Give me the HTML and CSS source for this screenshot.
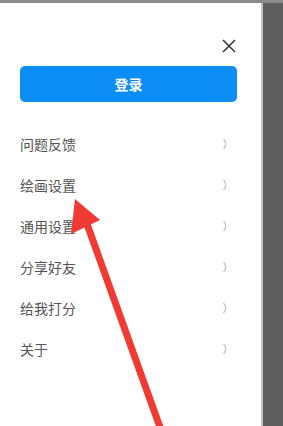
FILE: index.html
```html
<!DOCTYPE html>
<html lang="zh-CN">
<head>
    <meta charset="UTF-8">
    <meta name="viewport" content="width=device-width, initial-scale=1.0">
    <title>设置</title>
    <link rel="stylesheet" href="styles.css">
</head>
<body>
    <div class="topbar"></div>
    <div class="screen">
        <div class="drawer">
            <div class="close-row">
                <svg class="close" width="16" height="16" viewBox="0 0 16 16">
                    <path d="M2 2 L14 14 M14 2 L2 14" stroke="#333" stroke-width="1.5" fill="none"/>
                </svg>
            </div>

            <button class="login">登录</button>

            <ul class="menu">
                <li>问题反馈<svg class="chev" width="7" height="12" viewBox="0 0 7 12"><path d="M1.5 1 Q6 6 1.5 11" stroke="#c2c2c2" stroke-width="1.3" fill="none"/></svg></li>
                <li>绘画设置<svg class="chev" width="7" height="12" viewBox="0 0 7 12"><path d="M1.5 1 Q6 6 1.5 11" stroke="#c2c2c2" stroke-width="1.3" fill="none"/></svg></li>
                <li>通用设置<svg class="chev" width="7" height="12" viewBox="0 0 7 12"><path d="M1.5 1 Q6 6 1.5 11" stroke="#c2c2c2" stroke-width="1.3" fill="none"/></svg></li>
                <li>分享好友<svg class="chev" width="7" height="12" viewBox="0 0 7 12"><path d="M1.5 1 Q6 6 1.5 11" stroke="#c2c2c2" stroke-width="1.3" fill="none"/></svg></li>
                <li>给我打分<svg class="chev" width="7" height="12" viewBox="0 0 7 12"><path d="M1.5 1 Q6 6 1.5 11" stroke="#c2c2c2" stroke-width="1.3" fill="none"/></svg></li>
                <li>关于<svg class="chev" width="7" height="12" viewBox="0 0 7 12"><path d="M1.5 1 Q6 6 1.5 11" stroke="#c2c2c2" stroke-width="1.3" fill="none"/></svg></li>
            </ul>
        </div>
        <div class="shade"></div>
    </div>

    <!-- annotation arrow drawn over the screenshot -->
    <svg class="arrow" width="283" height="426" viewBox="0 0 283 426">
        <line x1="87" y1="224" x2="161" y2="430" stroke="#ef3b33" stroke-width="7"/>
        <polygon points="75,199 71,234 100,220" fill="#ef3b33"/>
    </svg>
</body>
</html>
```

FILE: styles.css
```css
body {
    margin: 0;
    height: 426px;
    overflow: hidden;
    font-family: "Noto Sans CJK SC", "Noto Sans", sans-serif;
    background-color: #fff;
    position: relative;
}

.topbar {
    height: 3px;
    background-color: #8a8a8a;
}

.screen {
    display: flex;
    height: 423px;
}

.drawer {
    width: 237px;
    padding-left: 20px;
    padding-right: 4px;
    border-right: 2px solid #c4c4c4;
    background-color: #fff;
}

.shade {
    flex: 1;
    background-color: #5e5e5e;
}

.close-row {
    display: flex;
    justify-content: flex-end;
    padding-top: 35px;
    padding-right: 3px;
    width: 217px;
}

.login {
    display: block;
    width: 217px;
    height: 36px;
    margin-top: 12px;
    border: none;
    border-radius: 5px;
    background-color: #0c8ef6;
    color: #fff;
    font-family: inherit;
    font-size: 14px;
    font-weight: bold;
}

.menu {
    list-style: none;
    margin: 21px 0 0;
    padding: 0;
    width: 217px;
}

.menu li {
    display: flex;
    justify-content: space-between;
    align-items: center;
    height: 41px;
    font-size: 14px;
    color: #555;
}

.chev {
    margin-right: 8px;
}

.arrow {
    position: absolute;
    top: 0;
    left: 0;
}
```
